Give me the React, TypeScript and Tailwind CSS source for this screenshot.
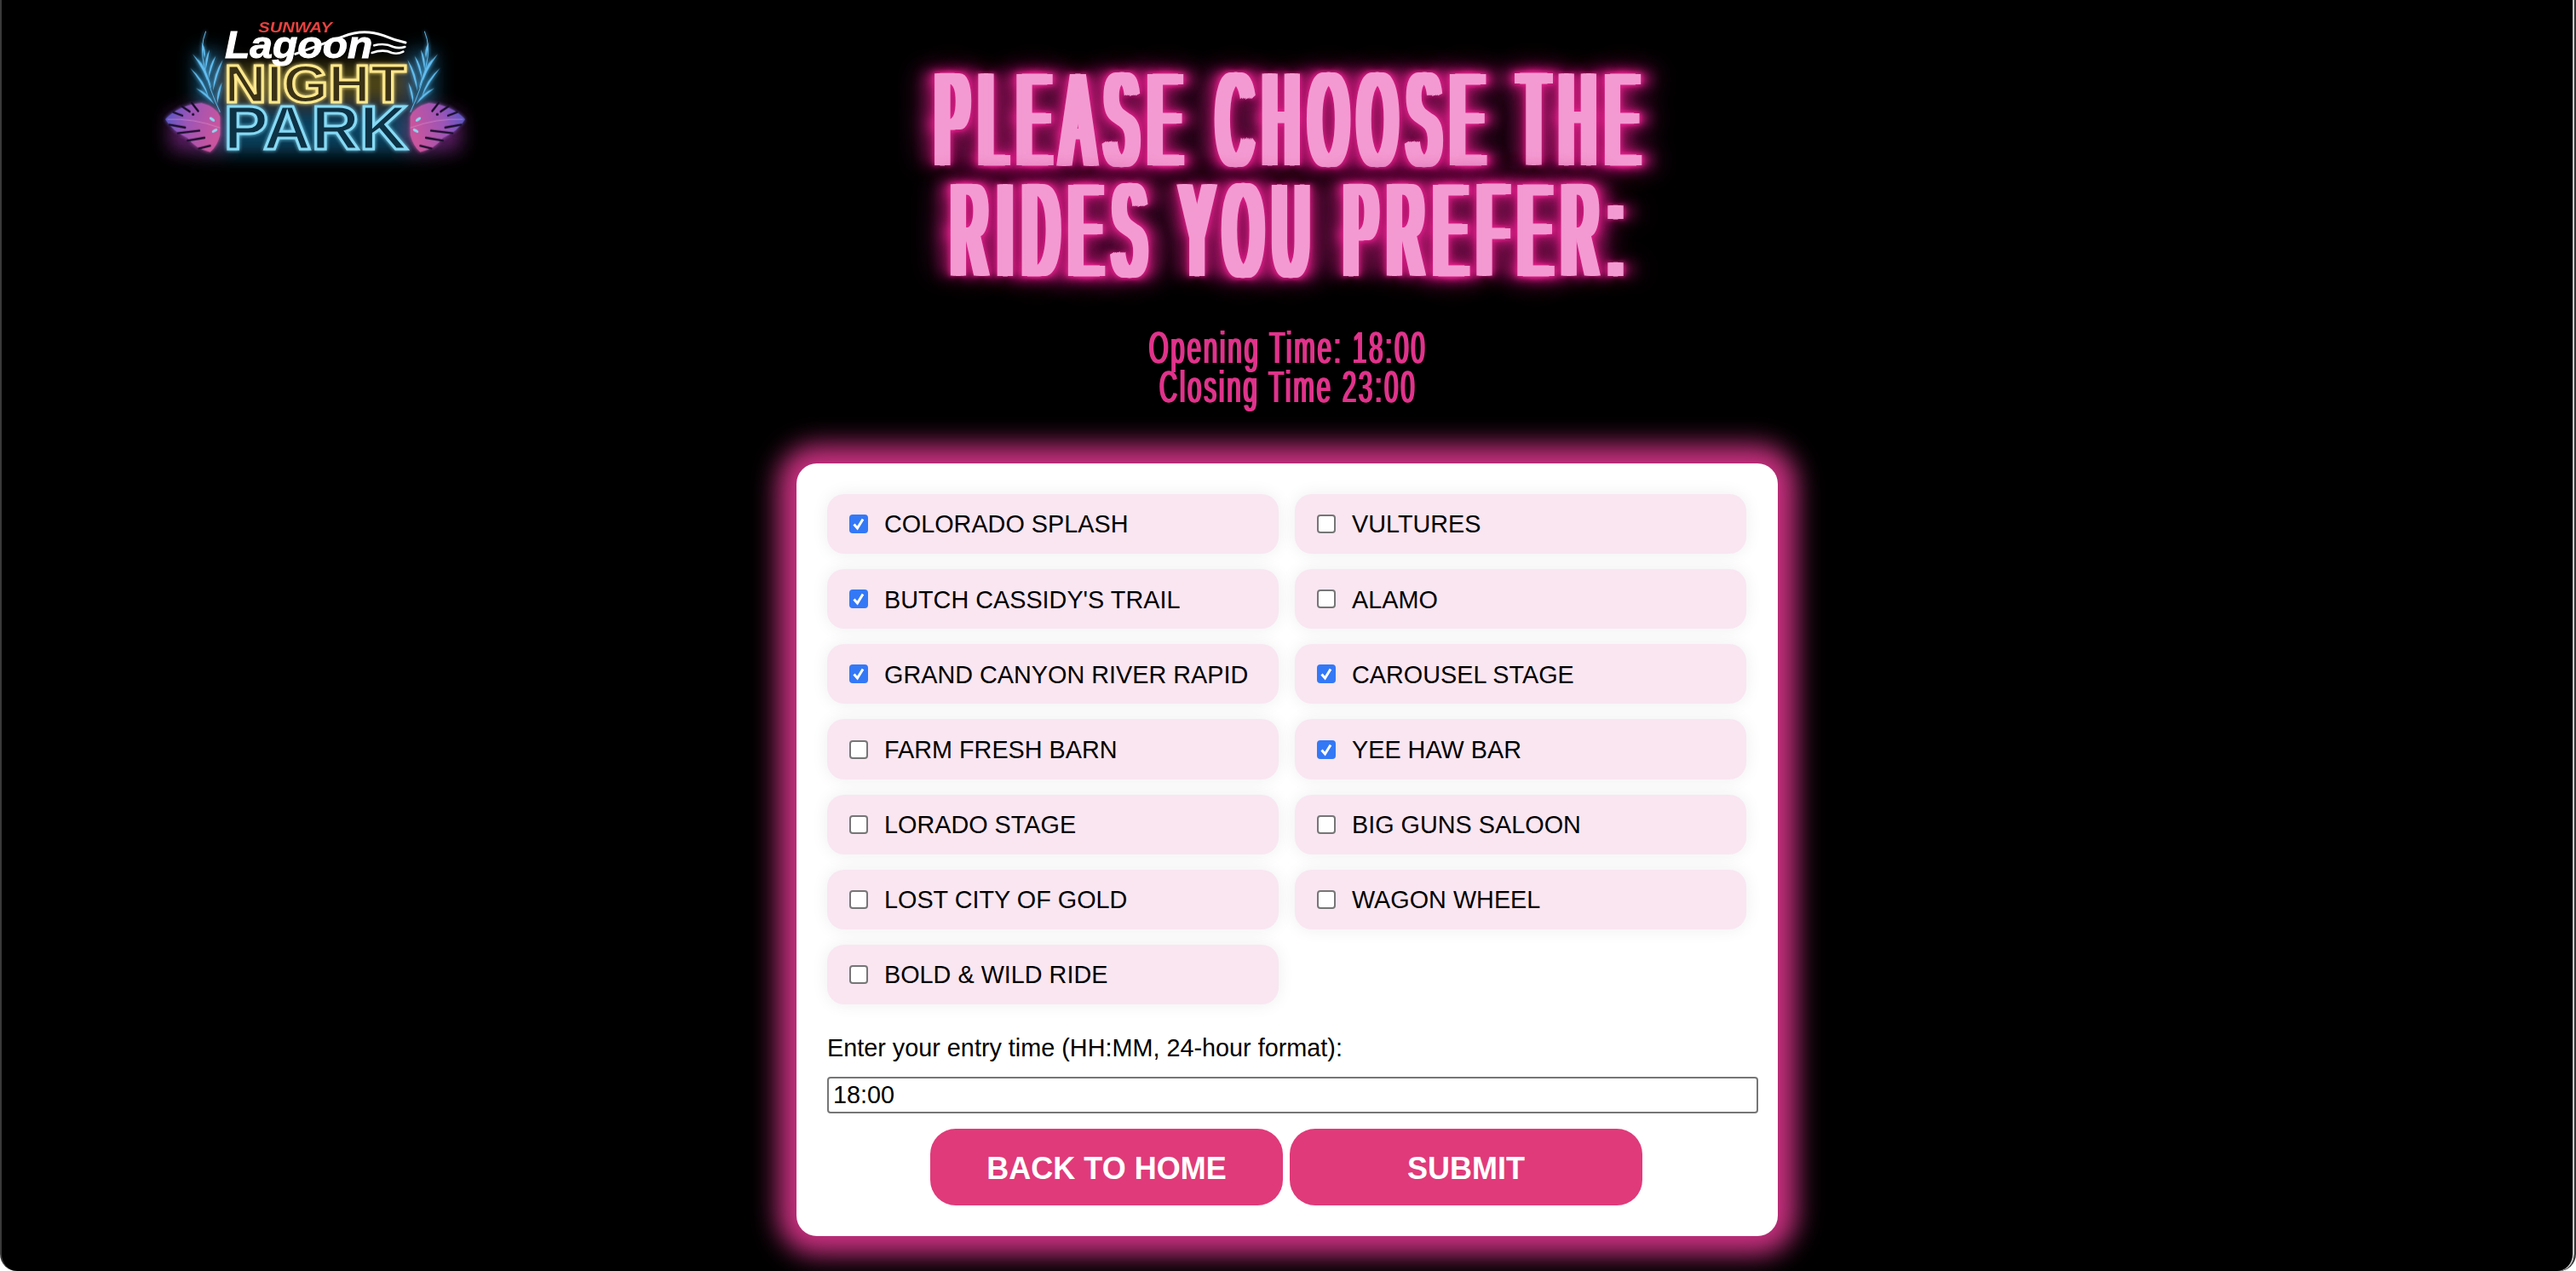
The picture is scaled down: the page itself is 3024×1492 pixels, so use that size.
import React from "react";

const rides: [string, boolean][] = [
  ["COLORADO SPLASH", true],
  ["VULTURES", false],
  ["BUTCH CASSIDY'S TRAIL", true],
  ["ALAMO", false],
  ["GRAND CANYON RIVER RAPID", true],
  ["CAROUSEL STAGE", true],
  ["FARM FRESH BARN", false],
  ["YEE HAW BAR", true],
  ["LORADO STAGE", false],
  ["BIG GUNS SALOON", false],
  ["LOST CITY OF GOLD", false],
  ["WAGON WHEEL", false],
  ["BOLD & WILD RIDE", false],
];

// base x, base y, tip x, tip y, bow of the leaflet
const fronds = [
  [150, 130, 140, 75, -6],
  [160, 210, 125, 130, -10],
  [175, 238, 108, 115, -16],
  [165, 268, 100, 165, -14],
  [185, 292, 120, 235, -10],
  [155, 170, 168, 100, 6],
  [165, 200, 190, 122, 8],
  [180, 245, 215, 135, 10],
  [195, 290, 212, 215, 6],
];

const leaflet = ([bx, by, tx, ty, bow]: number[]) => {
  const mx = (bx + tx) / 2;
  const my = (by + ty) / 2;
  const dx = ty - by;
  const dy = bx - tx;
  const n = Math.hypot(dx, dy);
  const ox = (dx / n) * bow;
  const oy = (dy / n) * bow;
  const wx = (dx / n) * 7;
  const wy = (dy / n) * 7;
  return `M${bx} ${by} Q${mx + ox + wx} ${my + oy + wy} ${tx} ${ty} Q${mx + ox - wx} ${my + oy - wy} ${bx} ${by} Z`;
};

const Leaves = () => (
  <g transform="translate(120 75)">
    <path d="M155 35 Q132 90 150 160 Q165 235 205 320" fill="none" stroke="#63bdf0" strokeWidth="3" />
    {fronds.map((f) => (
      <path key={f.join()} d={leaflet(f)} fill="#62bdf0" />
    ))}
    <path d="M12 345 Q60 295 140 288 Q190 300 205 335 L205 400 Q195 440 170 460 Q120 450 90 410 Q40 390 12 345 Z" fill="url(#monstera)" />
    <g stroke="#160a28" strokeWidth="7" strokeLinecap="round" fill="none">
      <path d="M40 320 L72 332" />
      <path d="M70 299 L98 318" />
      <path d="M105 287 L128 316" />
      <path d="M26 364 L82 374" />
      <path d="M56 394 L132 385" />
      <path d="M90 420 L150 410" />
      <path d="M130 448 L170 438" />
    </g>
    <ellipse cx="110" cy="328" rx="5" ry="4" fill="#160a28" />
    <ellipse cx="177" cy="345" rx="11" ry="5" fill="#8fd8f0" transform="rotate(35 177 345)" />
    <ellipse cx="186" cy="385" rx="11" ry="5" fill="#8fd8f0" transform="rotate(-30 186 385)" />
    <path d="M20 345 Q110 340 205 375" stroke="#eba6d6" strokeWidth="1.5" fill="none" />
  </g>
);

const Logo = () => (
  <svg viewBox="0 0 1350 660" className="block h-[220px] w-[450px]" role="img" aria-label="Sunway Lagoon Night Park">
    <defs>
      <linearGradient id="monstera" x1="0" x2="1" y1="0" y2="0.3">
        <stop offset="0" stopColor="#4a58c8" />
        <stop offset="0.45" stopColor="#9a55b8" />
        <stop offset="1" stopColor="#c8549e" />
      </linearGradient>
      <filter id="wide" x="-30%" y="-40%" width="160%" height="180%">
        <feGaussianBlur stdDeviation="34" />
      </filter>
      <filter id="neon" x="-10%" y="-20%" width="120%" height="140%">
        <feGaussianBlur stdDeviation="6" result="b" />
        <feMerge>
          <feMergeNode in="b" />
          <feMergeNode in="SourceGraphic" />
        </feMerge>
      </filter>
    </defs>

    <g filter="url(#wide)" opacity="0.7">
      <rect x="240" y="380" width="840" height="160" fill="#0e5f88" />
      <rect x="150" y="400" width="170" height="130" fill="#8a2f98" />
      <rect x="1000" y="400" width="170" height="130" fill="#8a2f98" />
      <rect x="240" y="180" width="90" height="190" fill="#1b6f9c" />
      <rect x="990" y="180" width="90" height="190" fill="#1b6f9c" />
      <rect x="340" y="230" width="640" height="130" fill="#6e6322" />
    </g>

    <g filter="url(#neon)">
      <Leaves />
      <g transform="matrix(-1 0 0 1 1320 0)">
        <Leaves />
      </g>
    </g>

    <g fontFamily="'Liberation Sans', Arial, sans-serif" fontWeight="700">
      <text x="340" y="360" fontSize="188" textLength="640" lengthAdjust="spacingAndGlyphs" fill="#3a3315" stroke="#ffe88c" strokeWidth="9" filter="url(#neon)">
        NIGHT
      </text>
      <text x="338" y="524" fontSize="218" textLength="648" lengthAdjust="spacingAndGlyphs" fill="#0b3044" stroke="#86daf5" strokeWidth="9" filter="url(#neon)">
        PARK
      </text>
      <text x="342" y="204" fontSize="132" fontStyle="italic" textLength="520" lengthAdjust="spacingAndGlyphs" fill="#ffffff" stroke="#ffffff" strokeWidth="3">
        Lagoon
      </text>
      <text x="460" y="115" fontSize="48" fontStyle="italic" textLength="260" lengthAdjust="spacingAndGlyphs" fill="#e8423f">
        SUNWAY
      </text>
    </g>
    <g fill="none" stroke="#ffffff" strokeLinecap="round">
      <path d="M590 190 Q700 150 760 128 Q830 100 900 125 Q940 142 978 150" strokeWidth="9" />
      <path d="M868 160 Q905 150 935 165 Q955 172 976 165" strokeWidth="8" />
      <path d="M860 186 Q900 172 930 186 Q950 192 970 182" strokeWidth="8" />
    </g>
  </svg>
);

function Checkbox({ checked }: { checked: boolean }) {
  if (checked) {
    return (
      <span className="flex h-[22px] w-[22px] shrink-0 items-center justify-center rounded-[4px] bg-[#3478f6]">
        <svg viewBox="0 0 22 22" className="h-[22px] w-[22px]" fill="none">
          <path d="M5.5 11.5 L9.5 16 L16 5.5" stroke="#ffffff" strokeWidth="3" />
        </svg>
      </span>
    );
  }
  return <span className="block h-[22px] w-[22px] shrink-0 rounded-[4px] border-2 border-[#767676] bg-white" />;
}

export default function App() {
  return (
    <div className="h-[1492px] w-[3024px] overflow-hidden rounded-b-[20px] border-x-2 border-x-[#3a3a3a] bg-black pr-[2px] font-['Liberation_Sans',Arial,sans-serif] shadow-[inset_-2px_0_0_#c8c8c8]">
      <div className="grid grid-cols-[1fr_1000px_1fr]">
        <div className="pl-[148px]">
          <Logo />
        </div>
        <div className="flex flex-col items-center pt-[76px]">
          <h1 className="origin-top scale-x-[0.362] whitespace-nowrap pl-[38px] text-center text-[155px] leading-[130px] font-normal tracking-[38px] text-[#f49ad2] [-webkit-text-stroke:1px_#f49ad2] [text-shadow:6px_0_0_#f49ad2,-6px_0_0_#f49ad2,12px_0_0_#f49ad2,-12px_0_0_#f49ad2,18px_0_0_#f49ad2,-18px_0_0_#f49ad2,0_0_8px_#e0218a,18px_0_8px_#e0218a,-18px_0_8px_#e0218a,24px_0_14px_#d81f85,-24px_0_14px_#d81f85,45px_0_24px_#c01c78,-45px_0_24px_#c01c78,0_0_30px_#d81f85,60px_0_50px_#8e1660,-60px_0_50px_#8e1660,0_0_60px_#a01866]">
            PLEASE CHOOSE THE
            <br />
            RIDES YOU PREFER:
          </h1>
          <div className="mt-[50px] origin-top scale-x-[0.575] whitespace-nowrap pl-[5px] text-center text-[51px] leading-[46px] tracking-[5px] text-[#e0338b] [text-shadow:2px_0_0_#e0338b,-2px_0_0_#e0338b]">
            Opening Time: 18:00
            <br />
            Closing Time 23:00
          </div>
        </div>
        <div />
      </div>

      <div className="mx-auto mt-[66px] w-[1152px] rounded-[24px] bg-white p-[36px] shadow-[0_0_30px_22px_#c6307f]">
        <div className="grid grid-cols-[530px_530px] gap-x-[19px] gap-y-[18px]">
          {rides.map(([name, checked]) => (
            <label key={name} className="flex h-[70.17px] items-center gap-[19px] rounded-[20px] bg-[#f9e6f1] pl-[26px] text-[28.8px] text-black shadow-[0_0_20px_rgba(0,0,0,0.07)]">
              <Checkbox checked={checked} />
              <span className="pt-[2px]">{name}</span>
            </label>
          ))}
        </div>
        <div className="mt-[33px] text-[28.8px] leading-[36px] text-black">Enter your entry time (HH:MM, 24-hour format):</div>
        <input
          readOnly
          value="18:00"
          className="mt-[16px] block h-[43px] w-[1093px] rounded-[4px] border-2 border-[#767676] px-[5px] text-[28.8px] text-black"
        />
        <div className="mt-[18px] flex justify-center gap-[8px] pr-[2px]">
          <button className="h-[90px] w-[414px] rounded-[30px] bg-[#e03a7a] pt-[4px] text-[36px] font-bold text-white">BACK TO HOME</button>
          <button className="h-[90px] w-[414px] rounded-[30px] bg-[#e03a7a] pt-[4px] text-[36px] font-bold text-white">SUBMIT</button>
        </div>
      </div>
    </div>
  );
}
